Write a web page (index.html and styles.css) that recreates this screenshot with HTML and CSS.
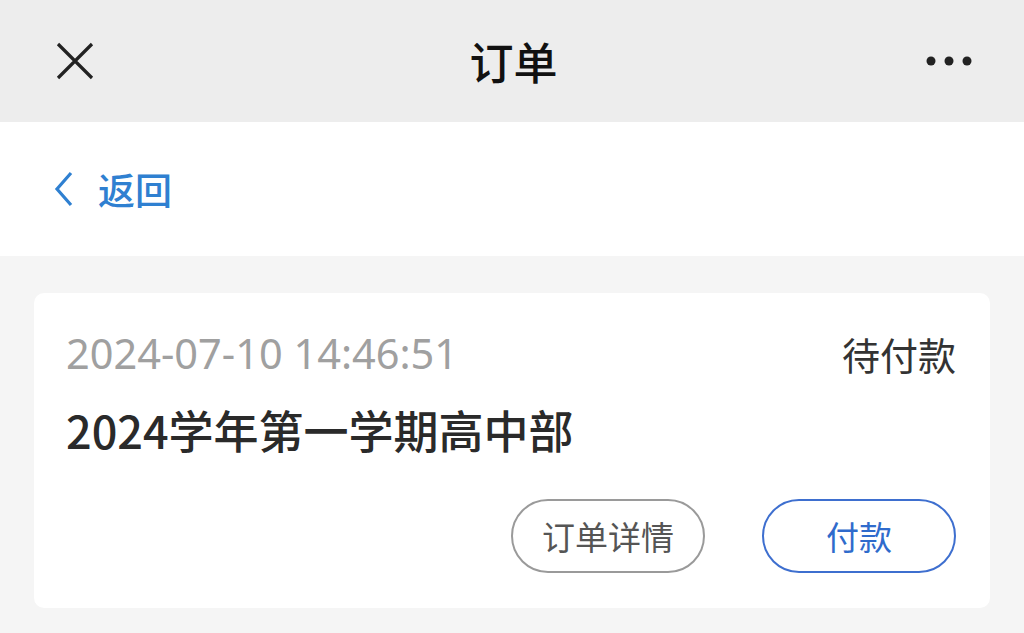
FILE: index.html
```html
<!doctype html>
<html lang="zh-CN">
  <head>
    <meta charset="utf-8">
    <title>订单</title>
    <link rel="stylesheet" href="styles.css">
  </head>
  <body>
    <div class="topbar">
      <span class="close">
        <svg width="40" height="40" viewBox="0 0 40 40"><path d="M3 3 L37 37 M37 3 L3 37" stroke="#222" stroke-width="3.2" fill="none"/></svg>
      </span>
      <span class="title">订单</span>
      <span class="more">
        <svg width="46" height="12" viewBox="0 0 46 12"><circle cx="5" cy="6" r="4.5" fill="#222"/><circle cx="23" cy="6" r="4.5" fill="#222"/><circle cx="41" cy="6" r="4.5" fill="#222"/></svg>
      </span>
    </div>

    <div class="backbar">
      <svg width="20" height="36" viewBox="0 0 20 36"><path d="M17 2 L3 18 L17 34" stroke="#2f80d1" stroke-width="3.2" fill="none"/></svg>
      <span class="back-text">返回</span>
    </div>

    <div class="list">
      <div class="card">
        <div class="card-head">
          <span class="date">2024-07-10 14:46:51</span>
          <span class="status">待付款</span>
        </div>
        <div class="card-title">2024学年第一学期高中部</div>
        <div class="card-actions">
          <span class="btn">订单详情</span>
          <span class="btn btn-pay">付款</span>
        </div>
      </div>
    </div>
  </body>
</html>
```

FILE: styles.css
```css
body {
  margin: 0;
  font-family: "Noto Sans CJK SC", "Noto Sans", sans-serif;
  background: #f5f5f5;
  color: #333;
}

.topbar {
  height: 122px;
  background: #ededed;
  display: flex;
  align-items: center;
  justify-content: space-between;
  padding: 0 52px 0 55px;
}

.close, .more { width: 46px; display: flex; }
.more { justify-content: flex-end; }

.title {
  font-size: 44px;
  color: #111;
  font-weight: 500;
}

.backbar {
  height: 134px;
  background: #fff;
  display: flex;
  align-items: center;
  padding-left: 54px;
  gap: 24px;
}

.back-text {
  font-size: 37px;
  color: #2f80d1;
  font-weight: 500;
}

.list {
  padding: 37px 34px 0 34px;
}

.card {
  background: #fff;
  border-radius: 10px;
  padding: 32px 34px 35px 32px;
}

.card-head {
  display: flex;
  justify-content: space-between;
  align-items: center;
}

.date {
  font-family: "Noto Sans", sans-serif;
  font-size: 41.5px;
  color: #a0a0a0;
}

.status {
  font-size: 38px;
  color: #333;
}

.card-title {
  font-size: 45px;
  color: #2a2a2a;
  font-weight: 500;
  margin-top: 16px;
}

.card-actions {
  display: flex;
  justify-content: flex-end;
  gap: 57px;
  margin-top: 37px;
}

.btn {
  width: 190px;
  height: 70px;
  border: 2px solid #9a9a9a;
  border-radius: 37px;
  display: flex;
  align-items: center;
  justify-content: center;
  font-size: 33px;
  color: #555;
}

.btn-pay {
  border-color: #3e6fcf;
  color: #2f6bcc;
}
```
